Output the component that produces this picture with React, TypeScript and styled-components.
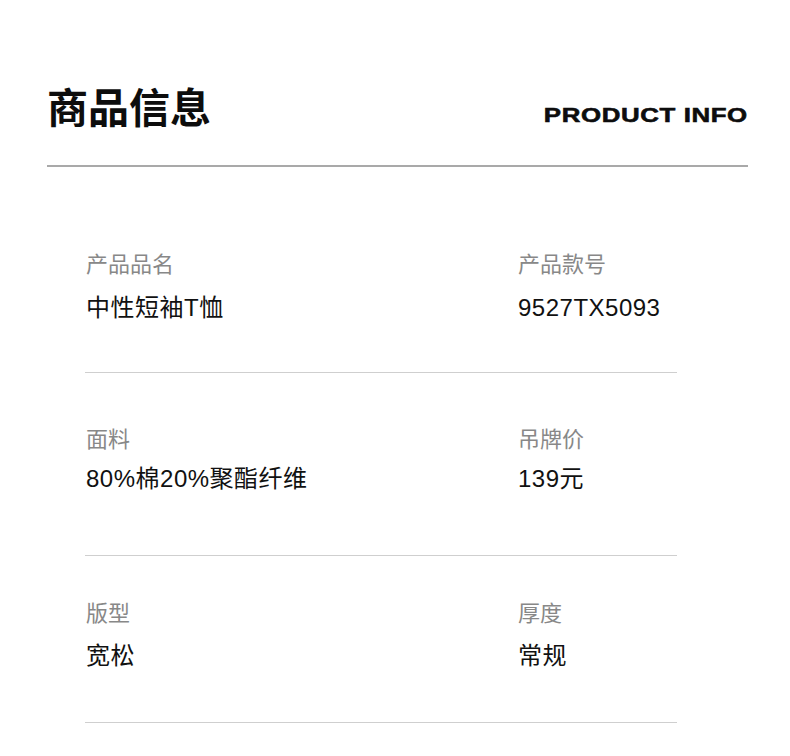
import React from "react";
import styled, { createGlobalStyle } from "styled-components";

const GlobalStyle = createGlobalStyle`
  html, body {
    margin: 0;
    padding: 0;
    background: #ffffff;
  }
  body {
    font-family: "Liberation Sans", "Noto Sans CJK SC", sans-serif;
    color: #111111;
  }
`;

type Spec = {
  label: string;
  value: string;
};

type RowData = {
  top: number;
  gap: number;
  bottom: number;
  items: [Spec, Spec];
};

const rows: RowData[] = [
  {
    top: 82,
    gap: 11,
    bottom: 47,
    items: [
      { label: "产品品名", value: "中性短袖T恤" },
      { label: "产品款号", value: "9527TX5093" },
    ],
  },
  {
    top: 51,
    gap: 7,
    bottom: 59,
    items: [
      { label: "面料", value: "80%棉20%聚酯纤维" },
      { label: "吊牌价", value: "139元" },
    ],
  },
  {
    top: 42,
    gap: 10,
    bottom: 49,
    items: [
      { label: "版型", value: "宽松" },
      { label: "厚度", value: "常规" },
    ],
  },
];

const Page = styled.main`
  width: 790px;
  padding-top: 83px;
`;

const Header = styled.header`
  margin-left: 47px;
  width: 701px;
  display: flex;
  align-items: flex-end;
  justify-content: space-between;
  padding-bottom: 38px;
  border-bottom: 2px solid #a9a9a9;
`;

const Title = styled.h1`
  margin: 0;
  font-family: "Noto Sans CJK SC", sans-serif;
  font-size: 41px;
  line-height: 44px;
  font-weight: 700;
  color: #0d0d0d;
`;

const Subtitle = styled.span`
  display: inline-block;
  margin-bottom: 2px;
  font-family: "Liberation Sans", sans-serif;
  font-size: 21px;
  line-height: 20px;
  font-weight: 700;
  letter-spacing: 0.5px;
  color: #0d0d0d;
  transform: scaleX(1.23);
  transform-origin: right center;
  -webkit-text-stroke: 0.6px #0d0d0d;
`;

const Table = styled.section`
  margin-left: 85px;
  width: 592px;
`;

const Row = styled.div<{ $top: number; $bottom: number }>`
  display: grid;
  grid-template-columns: 432px 1fr;
  padding-top: ${(p) => p.$top}px;
  padding-bottom: ${(p) => p.$bottom}px;
  border-bottom: 1px solid #cfcfcf;
`;

const Cell = styled.div<{ $gap: number }>`
  display: flex;
  flex-direction: column;
  gap: ${(p) => p.$gap}px;
  padding-left: 1px;
`;

const Label = styled.span`
  font-size: 22px;
  line-height: 31px;
  color: #888888;
`;

const Value = styled.span`
  font-size: 24px;
  line-height: 34px;
  letter-spacing: 0.5px;
  color: #111111;
`;

export default function App() {
  return (
    <>
      <GlobalStyle />
      <Page>
        <Header>
          <Title>商品信息</Title>
          <Subtitle>PRODUCT INFO</Subtitle>
        </Header>
        <Table>
          {rows.map((row, i) => (
            <Row key={i} $top={row.top} $bottom={row.bottom}>
              {row.items.map((item) => (
                <Cell key={item.label} $gap={row.gap}>
                  <Label>{item.label}</Label>
                  <Value>{item.value}</Value>
                </Cell>
              ))}
            </Row>
          ))}
        </Table>
      </Page>
    </>
  );
}
